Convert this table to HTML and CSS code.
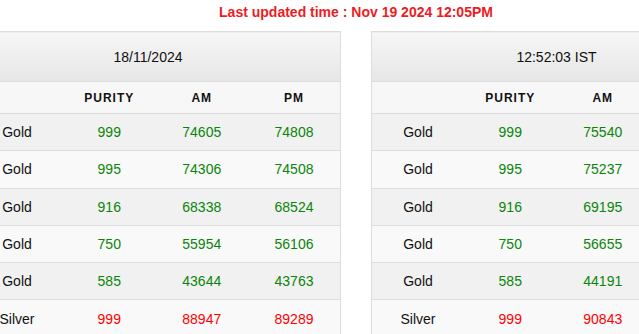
FILE: index.html
```html
<!DOCTYPE html>
<html>
<head>
<meta charset="utf-8">
<link rel="stylesheet" href="styles.css">
</head>
<body>
<div class="page">
  <div class="updated">Last updated time : Nov 19 2024 12:05PM</div>
  <div class="tables">
    <table class="rates rates-left">
      <thead>
        <tr><th class="title-cell" colspan="4">18/11/2024</th></tr>
        <tr class="cols"><th></th><th>PURITY</th><th>AM</th><th>PM</th></tr>
      </thead>
      <tbody>
        <tr><td class="metal">Gold</td><td class="up">999</td><td class="up">74605</td><td class="up">74808</td></tr>
        <tr><td class="metal">Gold</td><td class="up">995</td><td class="up">74306</td><td class="up">74508</td></tr>
        <tr><td class="metal">Gold</td><td class="up">916</td><td class="up">68338</td><td class="up">68524</td></tr>
        <tr><td class="metal">Gold</td><td class="up">750</td><td class="up">55954</td><td class="up">56106</td></tr>
        <tr><td class="metal">Gold</td><td class="up">585</td><td class="up">43644</td><td class="up">43763</td></tr>
        <tr><td class="metal">Silver</td><td class="down">999</td><td class="down">88947</td><td class="down">89289</td></tr>
      </tbody>
    </table>
    <table class="rates">
      <thead>
        <tr><th class="title-cell" colspan="4">12:52:03 IST</th></tr>
        <tr class="cols"><th></th><th>PURITY</th><th>AM</th><th>PM</th></tr>
      </thead>
      <tbody>
        <tr><td class="metal">Gold</td><td class="up">999</td><td class="up">75540</td><td class="up">75741</td></tr>
        <tr><td class="metal">Gold</td><td class="up">995</td><td class="up">75237</td><td class="up">75438</td></tr>
        <tr><td class="metal">Gold</td><td class="up">916</td><td class="up">69195</td><td class="up">69380</td></tr>
        <tr><td class="metal">Gold</td><td class="up">750</td><td class="up">56655</td><td class="up">56806</td></tr>
        <tr><td class="metal">Gold</td><td class="up">585</td><td class="up">44191</td><td class="up">44309</td></tr>
        <tr><td class="metal">Silver</td><td class="down">999</td><td class="down">90843</td><td class="down">91102</td></tr>
      </tbody>
    </table>
  </div>
</div>
</body>
</html>
```
FILE: styles.css
```css
html, body {
  margin: 0;
  padding: 0;
  overflow: hidden;
  background: #fff;
}
body {
  font-family: "Liberation Sans", Arial, sans-serif;
  color: #111;
}
.page {
  width: 772px;
  margin-left: -30px;
}
.updated {
  text-align: center;
  color: #ec1c24;
  font-weight: bold;
  font-size: 14px;
  line-height: 20px;
  padding: 2px 0 9px;
}
.tables {
  display: flex;
  gap: 30px;
}
.rates {
  width: 371px;
  table-layout: fixed;
  border-collapse: collapse;
  border: 1px solid #dddddd;
  font-size: 14px;
}
.rates th, .rates td {
  text-align: center;
  padding: 0;
  border-top: 1px solid #dddddd;
}
.title-cell {
  height: 49px;
  font-weight: normal;
  background: linear-gradient(#f6f6f6, #e6e6e6);
}
.rates-left .title-cell {
  padding-right: 15px;
}
.cols th {
  height: 31px;
  font-size: 12px;
  font-weight: bold;
  letter-spacing: 1px;
  background: #f7f7f7;
}
.rates tbody td {
  height: 36.3px;
}
.rates tbody tr:nth-child(odd) td {
  background: #f1f1f1;
}
.rates tbody tr:nth-child(even) td {
  background: #f9f9f9;
}
.up { color: #0a850a; }
.down { color: #ff0000; }
```
